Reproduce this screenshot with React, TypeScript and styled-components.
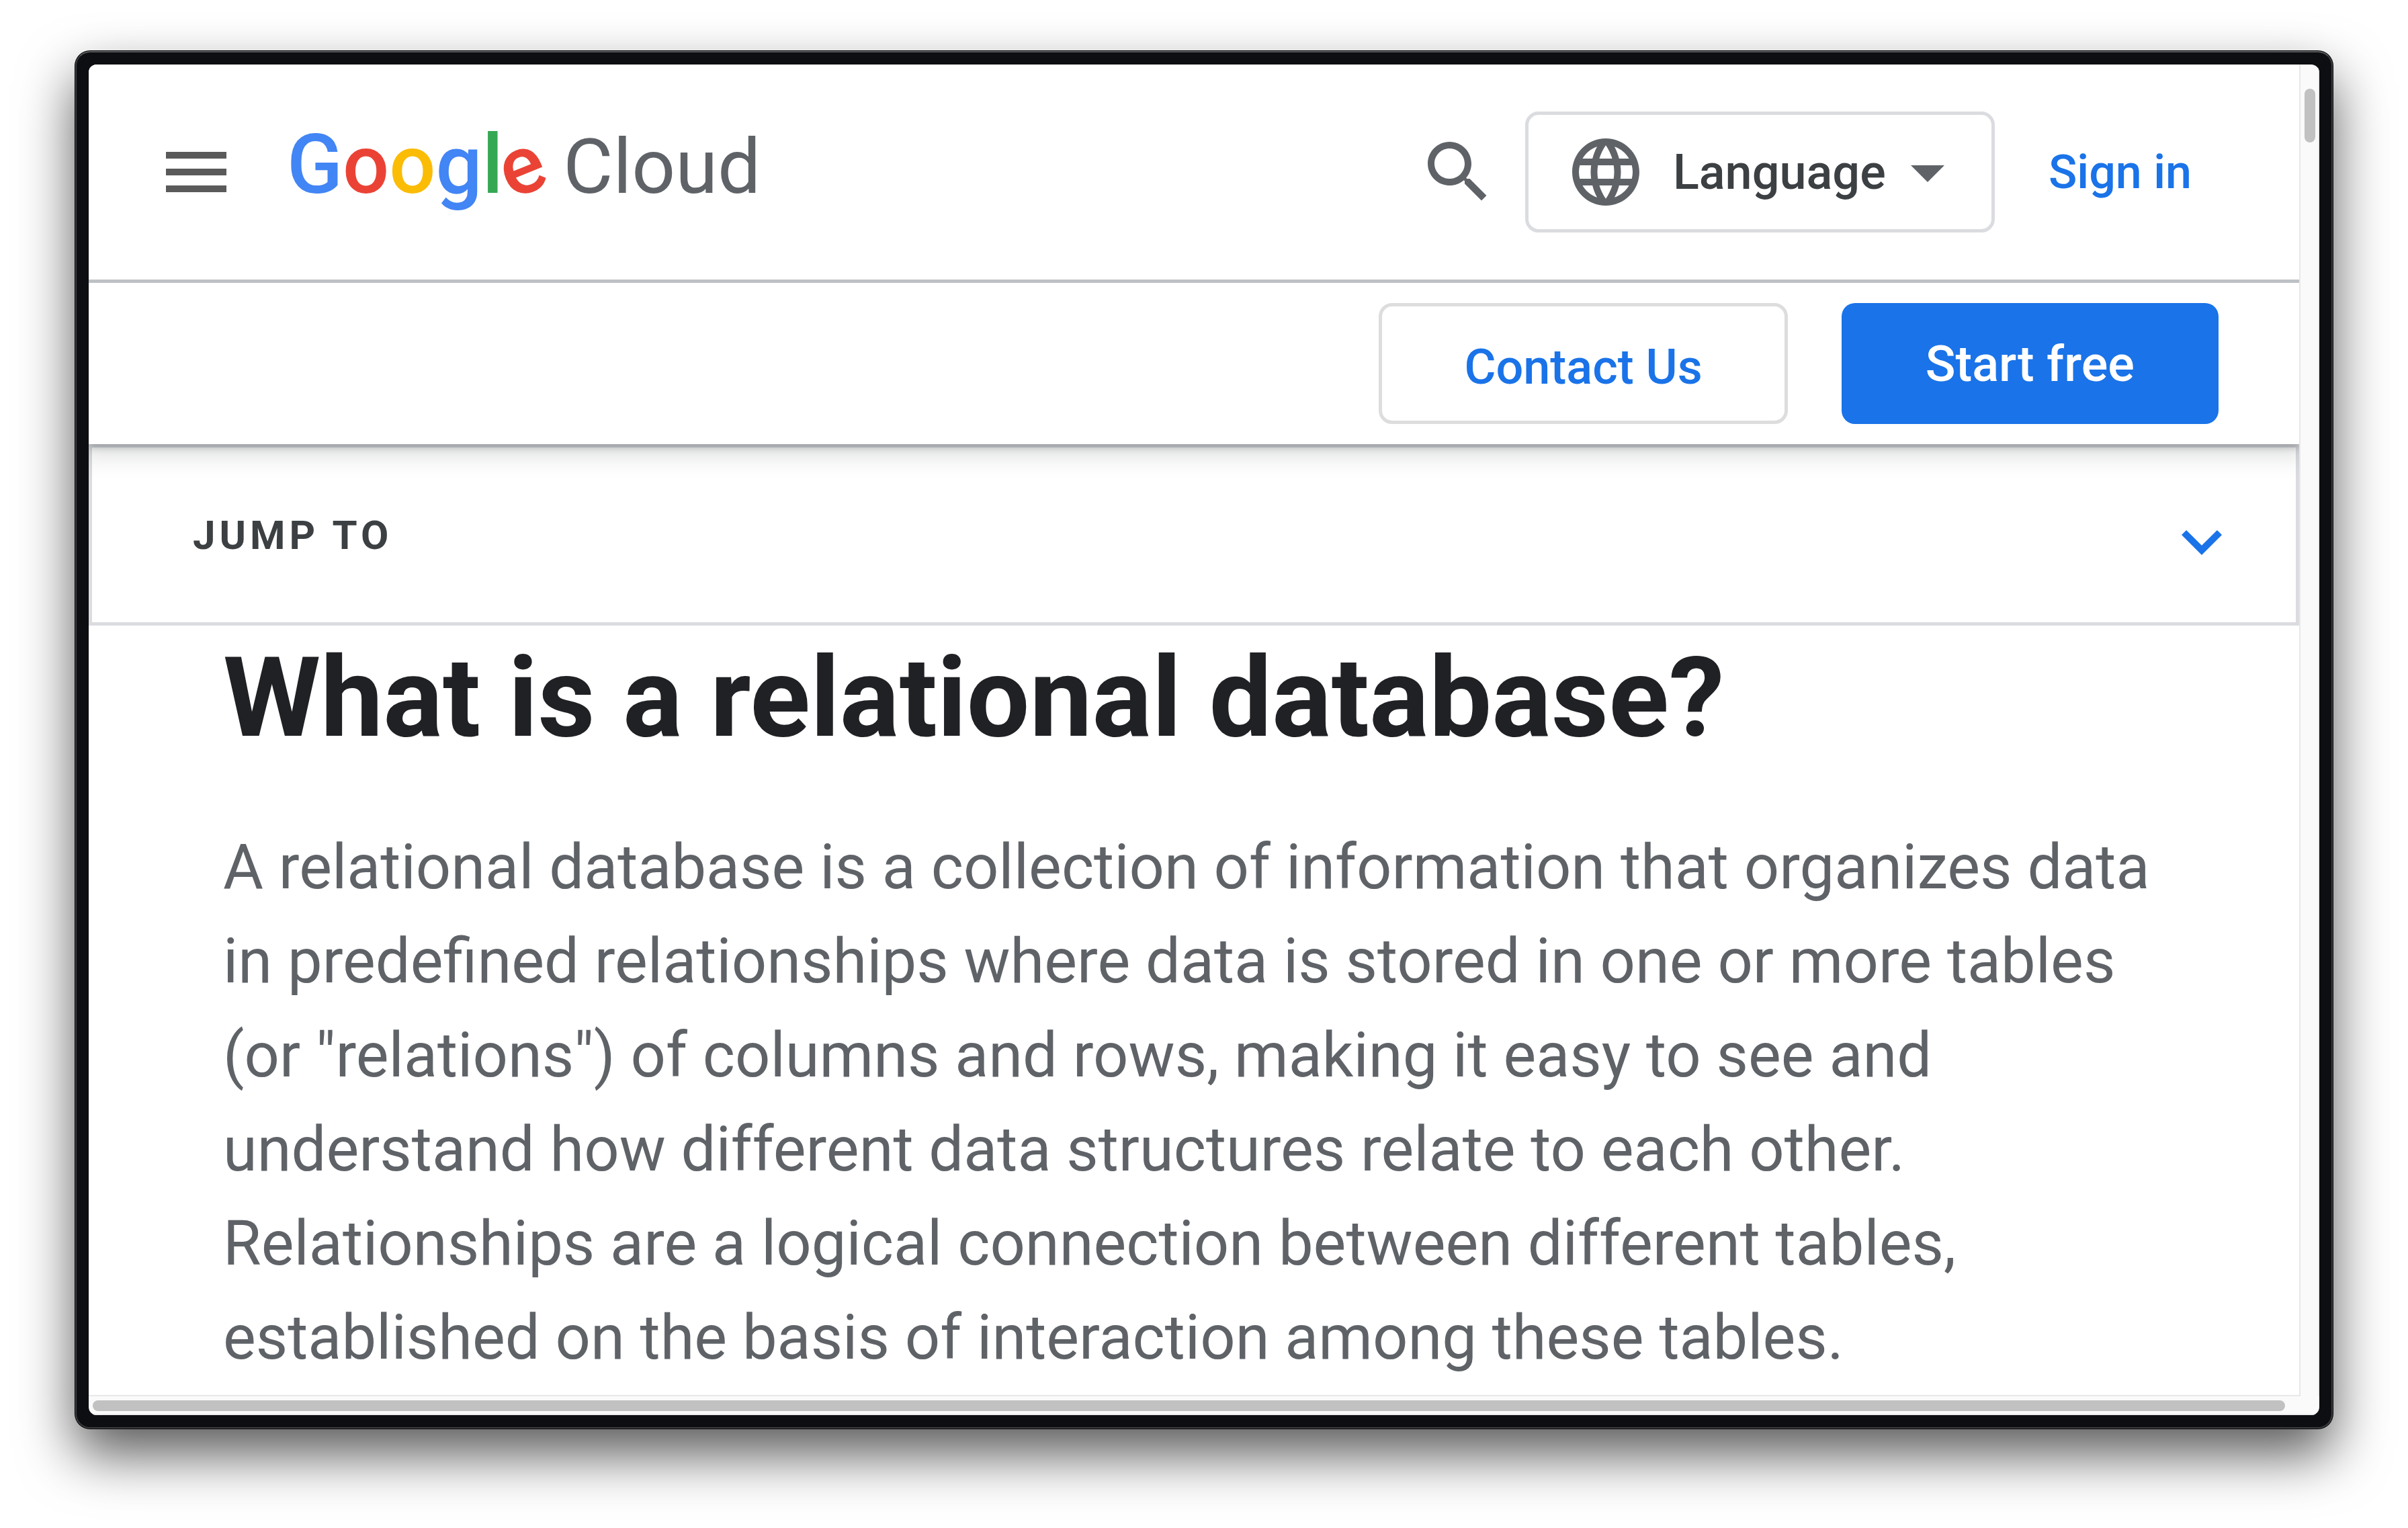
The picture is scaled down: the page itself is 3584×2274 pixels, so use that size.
import React from "react";
import styled, { createGlobalStyle } from "styled-components";

const color = {
  blue: "#1a73e8",
  ink: "#202124",
  text: "#3c4043",
  muted: "#5f6368",
  line: "#dadce0",
  rule: "#bdc1c6",
};

const GlobalStyle = createGlobalStyle`
  *, *::before, *::after { box-sizing: border-box; }
  body {
    margin: 0;
    background: #fff;
    font-family: Roboto, "Open Sans", sans-serif;
  }
`;

/* ---------- window chrome ---------- */

const Stage = styled.div`
  display: flex;
  min-height: 100vh;
  padding: 76px 112px 148px;
`;

const Bezel = styled.div`
  flex: 1;
  display: flex;
  min-width: 0;
  padding: 18px;
  background: #0d0e12;
  border: 2px solid #3d3e42;
  border-top-color: #5a5d5f;
  border-radius: 22px;
  box-shadow: 0 0 0 1px #000, 0 38px 82px rgba(0, 0, 0, 0.66);
`;

const Screen = styled.div`
  flex: 1;
  display: grid;
  grid-template-columns: minmax(0, 1fr) 28px;
  grid-template-rows: 1fr 28px;
  overflow: hidden;
  background: #fafafa;
  border-radius: 12px;
`;

const Page = styled.div`
  overflow: hidden;
  background: #fff;
  border: solid #e8e8e8;
  border-width: 0 2px 2px 0;
`;

const VerticalTrack = styled.div`
  padding: 36px 6px 0;
  border-right: 2px solid #ededed;
`;

const HorizontalTrack = styled.div`
  grid-column: 1 / -1;
  padding: 6px 51px 0 6px;
  border-bottom: 2px solid #ededed;
`;

const Thumb = styled.div<{ $length: string; $thickness: string }>`
  width: ${(p) => p.$length};
  height: ${(p) => p.$thickness};
  border-radius: 8px;
  background: #c1c1c1;
`;

/* ---------- shared parts ---------- */

const Icon = styled.svg`
  display: block;
  flex: none;
  width: 120px;
  height: 120px;
  fill: currentColor;
`;

const IconButton = styled.button<{ $color: string }>`
  flex: none;
  padding: 0;
  border: 0;
  background: none;
  color: ${(p) => p.$color};
  cursor: pointer;
`;

/* ---------- header ---------- */

const Header = styled.header`
  position: relative;
  z-index: 1;
  background: #fff;
  box-shadow: 0 5px 10px rgba(60, 64, 67, 0.3),
    0 10px 30px 10px rgba(60, 64, 67, 0.15);
`;

const TopBar = styled.div`
  display: flex;
  align-items: center;
  height: 325px;
  padding: 0 160px 0 100px;
  border-bottom: 5px solid ${color.rule};
`;

const Logo = styled.a`
  display: flex;
  align-items: baseline;
  gap: 24px;
  margin: 0 auto 0 75px;
  padding-bottom: 18px;
  line-height: 140px;
  text-decoration: none;
`;

const LogoName = styled.span`
  font-size: 122px;
  font-weight: 500;
`;

const LogoProduct = styled.span`
  color: ${color.muted};
  font-size: 114px;
`;

const Letter = styled.span<{ $color: string; $tilt?: number }>`
  display: inline-block;
  color: ${(p) => p.$color};
  transform: rotate(${(p) => p.$tilt ?? 0}deg);
  transform-origin: 50% 62%;
`;

const LanguagePicker = styled.label`
  display: flex;
  align-items: center;
  height: 180px;
  margin: 0 80px 0 40px;
  padding: 0 35px 0 55px;
  border: 5px solid ${color.line};
  border-radius: 20px;
  color: ${color.muted};
`;

const LanguageSelect = styled.select`
  appearance: none;
  margin: 0 2px 0 40px;
  padding: 0;
  border: 0;
  background: none;
  color: ${color.text};
  font: 500 72px Roboto, sans-serif;
`;

const SignIn = styled.a`
  color: ${color.blue};
  font-size: 70px;
  font-weight: 500;
  white-space: nowrap;
  text-decoration: none;
`;

const ActionBar = styled.div`
  display: flex;
  justify-content: flex-end;
  gap: 80px;
  padding: 30px 120px;
`;

const Action = styled.button`
  height: 180px;
  border-radius: 20px;
  font-family: inherit;
  font-weight: 500;
  white-space: nowrap;
  cursor: pointer;
`;

const OutlineAction = styled(Action)`
  padding: 10px 122px 0;
  border: 5px solid #ddd;
  background: #fff;
  color: ${color.blue};
  font-size: 72px;
`;

const FilledAction = styled(Action)`
  padding: 0 125px;
  border: 0;
  background: ${color.blue};
  color: #fff;
  font-size: 74px;
`;

/* ---------- content ---------- */

const JumpTo = styled.button`
  display: flex;
  align-items: center;
  justify-content: space-between;
  width: 100%;
  height: 270px;
  padding: 0 80px 0 150px;
  border: 5px solid ${color.line};
  background: #fff;
  color: ${color.text};
  font: 700 60px Roboto, sans-serif;
  letter-spacing: 6px;
  cursor: pointer;
`;

const JumpIcon = styled(Icon)`
  margin-top: 20px;
  color: ${color.blue};
`;

const Article = styled.main`
  padding: 8px 200px 0;
`;

const Title = styled.h1`
  margin: 0 0 82px;
  color: ${color.ink};
  font-size: 166px;
  font-weight: 700;
  line-height: 200px;
`;

const Lead = styled.p`
  margin: 0;
  color: ${color.muted};
  font-size: 92px;
  line-height: 140px;
`;

const icons = {
  menu: "M3 18h18v-2H3v2zm0-5h18v-2H3v2zm0-7v2h18V6H3z",
  search:
    "M15.5 14h-.79l-.28-.27C15.41 12.59 16 11.11 16 9.5 16 5.91 13.09 3 9.5 3S3 5.91 3 9.5 5.91 16 9.5 16c1.61 0 3.09-.59 4.23-1.57l.27.28v.79l5 4.99L20.49 19l-4.99-5zm-6 0C7.01 14 5 11.99 5 9.5S7.01 5 9.5 5 14 7.01 14 9.5 11.99 14 9.5 14z",
  globe:
    "M11.99 2C6.47 2 2 6.48 2 12s4.47 10 9.99 10C17.52 22 22 17.52 22 12S17.52 2 11.99 2zm6.93 6h-2.95c-.32-1.25-.78-2.45-1.38-3.56 1.84.63 3.37 1.91 4.33 3.56zM12 4.04c.83 1.2 1.48 2.53 1.91 3.96h-3.82c.43-1.43 1.08-2.76 1.91-3.96zM4.26 14C4.1 13.36 4 12.69 4 12s.1-1.36.26-2h3.38c-.08.66-.14 1.32-.14 2 0 .68.06 1.34.14 2H4.26zm.82 2h2.95c.32 1.25.78 2.45 1.38 3.56-1.84-.63-3.37-1.9-4.33-3.56zm2.95-8H5.08c.96-1.66 2.49-2.93 4.33-3.56C8.81 5.55 8.35 6.75 8.03 8zM12 19.96c-.83-1.2-1.48-2.53-1.91-3.96h3.82c-.43 1.43-1.08 2.76-1.91 3.96zM14.34 14H9.66c-.09-.66-.16-1.32-.16-2 0-.68.07-1.35.16-2h4.68c.09.65.16 1.32.16 2 0 .68-.07 1.34-.16 2zm.25 5.56c.6-1.11 1.06-2.31 1.38-3.56h2.95c-.96 1.65-2.49 2.93-4.33 3.56zM16.36 14c.08-.66.14-1.32.14-2 0-.68-.06-1.34-.14-2h3.38c.16.64.26 1.31.26 2s-.1 1.36-.26 2h-3.38z",
  caret: "M7 10l5 5 5-5z",
  chevron: "M16.59 8.59L12 13.17 7.41 8.59 6 10l6 6 6-6z",
};

const brand = [
  { char: "G", fill: "#4285f4" },
  { char: "o", fill: "#ea4335" },
  { char: "o", fill: "#fbbc05" },
  { char: "g", fill: "#4285f4" },
  { char: "l", fill: "#34a853" },
  { char: "e", fill: "#ea4335", tilt: -22 },
];

export default function App() {
  return (
    <>
      <GlobalStyle />
      <Stage>
        <Bezel>
          <Screen>
            <Page>
              <Header>
                <TopBar>
                  <IconButton type="button" aria-label="Main menu" $color="#5a5a5a">
                    <Icon viewBox="0 0 24 24"><path d={icons.menu} /></Icon>
                  </IconButton>
                  <Logo href="#home" aria-label="Google Cloud">
                    <LogoName>
                      {brand.map((l, i) => (
                        <Letter key={i} $color={l.fill} $tilt={l.tilt}>{l.char}</Letter>
                      ))}
                    </LogoName>
                    <LogoProduct>Cloud</LogoProduct>
                  </Logo>
                  <IconButton type="button" aria-label="Search" $color={color.muted}>
                    <Icon viewBox="0 0 24 24"><path d={icons.search} /></Icon>
                  </IconButton>
                  <LanguagePicker htmlFor="language">
                    <Icon viewBox="0 0 24 24"><path d={icons.globe} /></Icon>
                    <LanguageSelect id="language" aria-label="Language">
                      <option>Language</option>
                    </LanguageSelect>
                    <Icon viewBox="0 0 24 24"><path d={icons.caret} /></Icon>
                  </LanguagePicker>
                  <SignIn href="#signin">Sign in</SignIn>
                </TopBar>
                <ActionBar>
                  <OutlineAction type="button">Contact Us</OutlineAction>
                  <FilledAction type="button">Start free</FilledAction>
                </ActionBar>
              </Header>
              <JumpTo type="button" aria-expanded="false">
                JUMP TO
                <JumpIcon viewBox="0 0 24 24"><path d={icons.chevron} /></JumpIcon>
              </JumpTo>
              <Article>
                <Title>What is a relational database?</Title>
                <Lead>
                  A relational database is a collection of information that
                  organizes data in predefined relationships where data is
                  stored in one or more tables (or "relations") of columns and
                  rows, making it easy to see and understand how different data
                  structures relate to each other. Relationships are a logical
                  connection between different tables, established on the basis
                  of interaction among these tables.
                </Lead>
              </Article>
            </Page>
            <VerticalTrack aria-hidden="true">
              <Thumb $length="16px" $thickness="80px" />
            </VerticalTrack>
            <HorizontalTrack aria-hidden="true">
              <Thumb $length="100%" $thickness="16px" />
            </HorizontalTrack>
          </Screen>
        </Bezel>
      </Stage>
    </>
  );
}
